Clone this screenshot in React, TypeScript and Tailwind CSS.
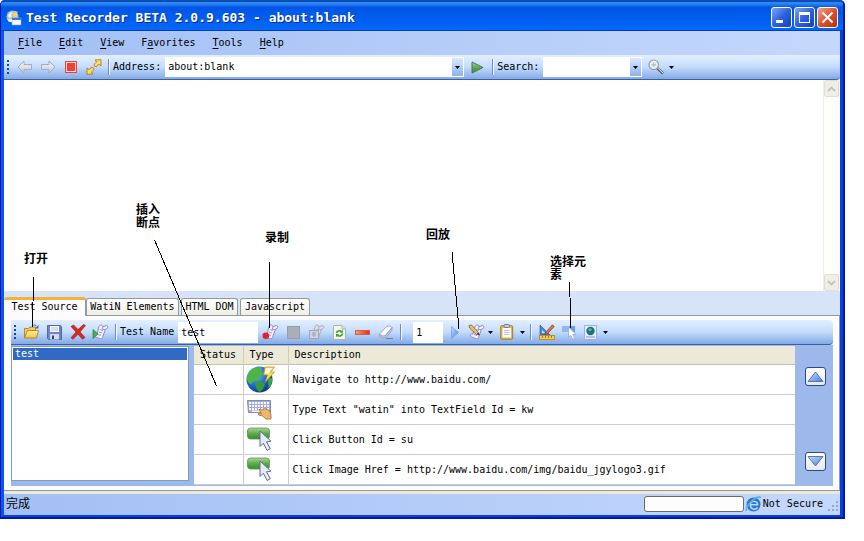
import type { ReactNode } from "react";

type Children = { children: ReactNode };

const MONO = "font-['DejaVu_Sans_Mono','Noto_Sans_CJK_SC',monospace]";

/* ---------- icons ---------- */

function Gradients() {
  return (
    <svg width="0" height="0" className="absolute" aria-hidden="true">
      <defs>
        <linearGradient id="gArrow" x1="0" y1="0" x2="0" y2="1">
          <stop offset="0" stopColor="#f3f6fb" />
          <stop offset="1" stopColor="#c3cbd8" />
        </linearGradient>
        <linearGradient id="gGreen" x1="0" y1="0" x2="0" y2="1">
          <stop offset="0" stopColor="#a9d694" />
          <stop offset="0.5" stopColor="#5dab4c" />
          <stop offset="1" stopColor="#3b8a34" />
        </linearGradient>
        <linearGradient id="gBlue" x1="0" y1="0" x2="1" y2="1">
          <stop offset="0" stopColor="#c9dcfb" />
          <stop offset="1" stopColor="#4a7fe0" />
        </linearGradient>
        <linearGradient id="gFolder" x1="0" y1="0" x2="0" y2="1">
          <stop offset="0" stopColor="#fff3a8" />
          <stop offset="1" stopColor="#f6c23c" />
        </linearGradient>
        <linearGradient id="gRed" x1="0" y1="0" x2="1" y2="0">
          <stop offset="0" stopColor="#f59a78" />
          <stop offset="1" stopColor="#d8321c" />
        </linearGradient>
        <radialGradient id="gGlobe" cx="0.35" cy="0.3" r="0.8">
          <stop offset="0" stopColor="#7cc4fa" />
          <stop offset="0.5" stopColor="#1f6fd6" />
          <stop offset="1" stopColor="#0a2c86" />
        </radialGradient>
      </defs>
    </svg>
  );
}

function AppIcon() {
  return (
    <svg width="16" height="16" viewBox="0 0 16 16" aria-hidden="true">
      <circle cx="6.5" cy="6.5" r="6" fill="#a9bdc9" />
      <path d="M2 5l3-3 2 1-2 2 1 2-3 1zM8 2l3 2-1 3-2-1z" fill="#f2f6e0" />
      <path d="M9 1l3 1-3 3 2 0-4 4 1-3H6z" fill="#f3d24a" />
      <rect x="6" y="8" width="9" height="7" fill="#f7f9ff" stroke="#8fa5d0" strokeWidth="0.6" />
      <rect x="6" y="8" width="9" height="2" fill="#3e78e0" />
      <path d="M1 9h5v3H3z" fill="#e8eef4" />
    </svg>
  );
}

function NavArrow({ flip = false }: { flip?: boolean }) {
  return (
    <svg width="16" height="14" viewBox="0 0 16 14" aria-hidden="true">
      <path
        d={flip ? "M15 7L9 1v3.500H1.500v5H9V13z" : "M1 7l6-6v3.500h7.500v5H7V13z"}
        fill="url(#gArrow)"
        stroke="#a7adb8"
      />
    </svg>
  );
}

function StopIcon() {
  return (
    <svg width="12" height="12" viewBox="0 0 12 12" aria-hidden="true">
      <rect x="0.5" y="0.5" width="11" height="11" fill="#ffd9d2" stroke="#e0452f" />
      <rect x="2" y="2" width="8" height="8" fill="#f04038" />
    </svg>
  );
}

function RefreshIcon() {
  return (
    <svg width="16" height="16" viewBox="0 0 16 16" aria-hidden="true">
      <path d="M9 1l6-.3V7l-2-1.600c-1.200.4-2 1.200-2.500 2.600L8 6.500c.3-1.500 1.200-2.700 2.600-3.500z" fill="#fddc6c" stroke="#b07a0c" strokeWidth="0.9" />
      <path d="M7 15l-6 .3V9l2 1.600c1.200-.4 2-1.200 2.500-2.600L8 9.500c-.3 1.500-1.200 2.700-2.600 3.500z" fill="#fddc6c" stroke="#b07a0c" strokeWidth="0.9" />
    </svg>
  );
}

function GoIcon() {
  return (
    <svg width="13" height="13" viewBox="0 0 13 13" aria-hidden="true">
      <path d="M1 1l11 5.500L1 12z" fill="url(#gGreen)" stroke="#4f7257" />
    </svg>
  );
}

function MagnifierIcon() {
  return (
    <svg width="16" height="16" viewBox="0 0 16 16" aria-hidden="true">
      <path d="M9 9l6 5.500" stroke="#5f5f5f" strokeWidth="2.600" />
      <path d="M9 8.500l6 5.500" stroke="#e4e4e4" strokeWidth="1" />
      <circle cx="5.800" cy="5.800" r="4.800" fill="#e6eff4" stroke="#9a9da2" strokeWidth="1.200" />
      <path d="M3.500 5.800h4.600M5.800 3.500v4.600" stroke="#b9c6cb" strokeWidth="1.400" />
    </svg>
  );
}

function FolderIcon() {
  return (
    <svg width="17" height="16" viewBox="0 0 17 16" aria-hidden="true">
      <path d="M1.500 14V4.500h4L7 3h5.500v4" fill="#f6cd58" stroke="#a87a14" strokeWidth="0.800" />
      <path d="M1.500 14l3-7.500h11l-2 7.500z" fill="url(#gFolder)" stroke="#a87a14" strokeWidth="0.800" />
      <path d="M9 2c2-1.500 3.500-1.500 5 .5" fill="none" stroke="#3f6fc0" />
      <path d="M15.500 1v3.500H12z" fill="#3f6fc0" />
    </svg>
  );
}

function SaveIcon() {
  return (
    <svg width="15" height="15" viewBox="0 0 15 15" aria-hidden="true">
      <path d="M.5.5h13l1 1v13H1.500l-1-1z" fill="#6f86cc" stroke="#5566a8" />
      <rect x="3" y="1" width="9" height="6" fill="#f5f8ff" />
      <path d="M4 3h7M4 5h7" stroke="#b8c4e4" />
      <rect x="3" y="9" width="9" height="5.500" fill="#d3dbe9" />
      <rect x="5" y="10.500" width="2" height="3.500" fill="#34447e" />
    </svg>
  );
}

function DeleteIcon() {
  return (
    <svg width="16" height="16" viewBox="0 0 16 16" aria-hidden="true">
      <path d="M1 2.500L3.500 1 8 5.500 13.500.5l2 1L10 8l5 5.500-2.500 1.700L8 10.300 3 15.300l-2-1.500L6 8z" fill="#d8291c" stroke="#a01410" strokeWidth="0.600" />
    </svg>
  );
}

function Scroll({ gray = false }: { gray?: boolean }) {
  const edge = gray ? "#a3a9b4" : "#8680b8";
  return (
    <>
      <path d="M7 2.500c.5-1.500 2.500-2 3.500-.8l.3 1 3.700-1.200c1.300 0 1.800 2 .8 2.800l-1.800.9-2.700 7.300c.3 1.500-1.800 3-3.200 2L3.500 13c-1.500-.3-1.500-2.800.3-3l1.200.2z" fill={gray ? "#d9dde4" : "#f0effb"} stroke={edge} strokeWidth="0.9" />
      <path d="M8 5.500l3 1M7 8l3 1M6 10.500l3 1M11 3l-.8 2.200 3 .5" fill="none" stroke={edge} strokeWidth="0.800" />
    </>
  );
}

function RunScriptIcon() {
  return (
    <svg width="17" height="16" viewBox="0 0 17 16" aria-hidden="true">
      <Scroll />
      <path d="M1 5.500l5 4.500-5 4.500z" fill="#4bb04a" stroke="#28802c" strokeWidth="0.700" />
    </svg>
  );
}

function RecordIcon() {
  return (
    <svg width="17" height="16" viewBox="0 0 17 16" aria-hidden="true">
      <Scroll />
      <circle cx="3.800" cy="11.800" r="3.300" fill="#e0202c" />
    </svg>
  );
}

function GrayBoxIcon() {
  return (
    <svg width="13" height="13" viewBox="0 0 13 13" aria-hidden="true">
      <rect x="0.500" y="0.500" width="12" height="12" fill="#a9aeb8" stroke="#989ea8" />
    </svg>
  );
}

function AddScriptIcon() {
  return (
    <svg width="17" height="16" viewBox="0 0 17 16" aria-hidden="true">
      <Scroll gray />
      <rect x="1.500" y="6.500" width="9" height="8" fill="#cdd2da" stroke="#a3a9b4" />
      <path d="M4 9h4M4 11h4M6 8v5" stroke="#a3a9b4" />
    </svg>
  );
}

function RecycleIcon() {
  return (
    <svg width="13" height="15" viewBox="0 0 13 15" aria-hidden="true">
      <path d="M.5.500h8.500l3.500 3.500v10.500H.5z" fill="#eef7e8" stroke="#a9b8ae" />
      <path d="M9 .5V4h3.500" fill="#d6e4d2" stroke="#a9b8ae" />
      <path d="M3.500 8c.2-2 3-3 5-1.500M9.500 8.500c-.2 2.500-3 3.200-5 1.800" fill="none" stroke="#3a9a30" strokeWidth="1.600" />
      <path d="M9.800 4.800v3H7zM3 12.300v-3.200h3z" fill="#3a9a30" />
    </svg>
  );
}

function MinusIcon() {
  return (
    <svg width="15" height="5" viewBox="0 0 15 5" aria-hidden="true">
      <rect x="0.500" y="0.500" width="14" height="4" fill="url(#gRed)" stroke="#dd5c40" />
    </svg>
  );
}

function EraserIcon() {
  return (
    <svg width="16" height="15" viewBox="0 0 16 15" aria-hidden="true">
      <path d="M8.500 1.500c2-1 5-.3 5.500 1l-6.500 8c-2 1.500-5.500.5-6-1.500z" fill="#f9fafd" stroke="#8f9bb2" strokeWidth="0.800" />
      <path d="M14 2.500v3L8 12.500c-1.500 1-5.500.5-6.500-1V9c1 2 4 2.500 6 1.500z" fill="#bcc6da" stroke="#8f9bb2" strokeWidth="0.700" />
      <path d="M8 13.500h7" stroke="#6d7fae" />
    </svg>
  );
}

function PlayIcon() {
  return (
    <svg width="8" height="13" viewBox="0 0 8 13" aria-hidden="true">
      <path d="M.5.500l7 6-7 6z" fill="url(#gBlue)" stroke="#6f9be8" strokeWidth="0.700" />
    </svg>
  );
}

function EditScriptIcon() {
  return (
    <svg width="17" height="16" viewBox="0 0 17 16" aria-hidden="true">
      <Scroll />
      <path d="M1 1.500l2.500-.5 7 7.500-2 2L1.500 4z" fill="#e3c06c" stroke="#7a6238" strokeWidth="0.800" />
      <path d="M8.500 10.500l2-2 1.300 3z" fill="#3b3326" />
    </svg>
  );
}

function ClipboardIcon() {
  return (
    <svg width="14" height="16" viewBox="0 0 14 16" aria-hidden="true">
      <rect x="0.700" y="1.700" width="12" height="13.500" rx="1" fill="#e6ba4c" stroke="#a07c28" />
      <rect x="2.500" y="4" width="8.500" height="9.500" fill="#fbfcff" />
      <path d="M4 6.500h5.500M4 8.500h5.500M4 10.500h5.500" stroke="#b5c3de" />
      <rect x="4" y="0.500" width="5.500" height="3" rx="1" fill="#c9ccd2" stroke="#777d88" />
    </svg>
  );
}

function RulerIcon() {
  return (
    <svg width="16" height="16" viewBox="0 0 16 16" aria-hidden="true">
      <path d="M1 1v10h10z" fill="#4c86e0" stroke="#2c5cb4" strokeWidth="0.700" />
      <path d="M3 6v3h3z" fill="#d5e5fa" />
      <rect x="0.500" y="11.500" width="15" height="4" fill="#f5cf4a" stroke="#b8902c" />
      <path d="M3.500 12v2M6.500 12v2M9.500 12v2M12.500 12v2" stroke="#a07c20" />
      <path d="M13.500.8l1.700 1.700-6.500 7-2.700 1.300 1-2.800z" fill="#e0743a" stroke="#7a3c1a" strokeWidth="0.700" />
    </svg>
  );
}

function PickIcon() {
  return (
    <svg width="15" height="16" viewBox="0 0 15 16" aria-hidden="true">
      <rect x="0" y="2" width="13" height="6" fill="#6a9de4" />
      <rect x="0" y="2" width="7" height="6" fill="#8fb8f0" />
      <path d="M6.500 3v10.500l2.300-2.200 1.900 4 2-1-1.900-3.800H14z" fill="#fff" stroke="#9ba8c0" strokeWidth="0.800" />
    </svg>
  );
}

function PageGlobeIcon() {
  return (
    <svg width="14" height="15" viewBox="0 0 14 15" aria-hidden="true">
      <path d="M.5.500h12v14H.5z" fill="#e4edfb" stroke="#9db1d6" />
      <path d="M2 12h9" stroke="#7d96c4" />
      <circle cx="6.500" cy="6" r="4.200" fill="#1f6e8e" />
      <path d="M4 4.500L6 3l2 1.500-2 2z" fill="#67c27a" />
    </svg>
  );
}

function GlobeIcon() {
  return (
    <svg width="30" height="27" viewBox="0 0 30 27" aria-hidden="true">
      <circle cx="13.500" cy="13.500" r="13" fill="url(#gGlobe)" />
      <path d="M2 8c3-5 9-7.500 14-6.500l-1 4 2 3-4 3-1 3-4 0-3 4C.5 16 .5 11 2 8z" fill="#4db540" />
      <path d="M9 16l6-1 4 3-2 5-3 3c-3-1-5-5-5-10z" fill="#3a9a3a" />
      <path d="M22 13l4-1c.5 4-1 8-3.500 10z" fill="#3fa83c" />
      <path d="M19 1h9.500l-4 5h4L19 16.500 21.500 9h-4z" fill="#f9dd58" stroke="#c08a14" strokeWidth="0.700" />
      <path d="M20 2h6.500L22 7.500h-3z" fill="#fffbe0" />
    </svg>
  );
}

function KeyboardIcon() {
  const keys: number[] = [0, 1, 2, 3, 4, 5, 6];
  return (
    <svg width="26" height="22" viewBox="0 0 26 22" aria-hidden="true">
      <path d="M1.500 2.500h23v12h-22z" fill="#a3aed4" stroke="#7f8bb8" />
      {[3, 6, 9].map((y) =>
        keys.map((k) => (
          <rect key={`${y}-${k}`} x={3 + k * 3} y={y + 1} width="2" height="2" fill="#fafbff" />
        )),
      )}
      <rect x="6" y="12.500" width="9" height="1.500" fill="#fafbff" />
      <path d="M13 11.500l3 .5 3-1.500 4.500 2 1.500 4.500v4h-5l-3.500-3-4-1 0-1.500 3 .3z" fill="#eeb56c" stroke="#a56b28" strokeWidth="0.800" />
    </svg>
  );
}

function ClickIcon() {
  return (
    <svg width="26" height="25" viewBox="0 0 26 25" aria-hidden="true">
      <rect x="1.500" y="1" width="22" height="11" rx="3" fill="url(#gGreen)" stroke="#559a4a" strokeWidth="0.800" />
      <path d="M14 4v15.500l3.300-3.300 3.800 7.300 3.200-1.800-3.800-6.900 4.500-.6z" fill="#e3eaf8" stroke="#5f6e8c" />
    </svg>
  );
}

function IeIcon() {
  return (
    <svg width="17" height="16" viewBox="0 0 17 16" aria-hidden="true">
      <circle cx="8.500" cy="8.500" r="7" fill="#2c78d0" />
      <path d="M5 8.800h8.200M12.500 11.500c-2 3-7 2.200-7.200-2.500C5.300 4.500 12 4 12.800 8.500" fill="none" stroke="#b9dcf8" strokeWidth="1.400" />
      <path d="M1.500 15C0 11 10-1 16 1.500" fill="none" stroke="#5aa9ea" strokeWidth="1.600" />
    </svg>
  );
}

function Chevron({ down = false }: { down?: boolean }) {
  return (
    <svg width="9" height="6" viewBox="0 0 9 6" aria-hidden="true">
      <path d={down ? "M1 1l3.500 3.500L8 1" : "M1 5l3.500-3.500L8 5"} fill="none" stroke="#c6c4b6" strokeWidth="1.800" />
    </svg>
  );
}

function CaretDown() {
  return (
    <svg width="5" height="3" viewBox="0 0 5 3" aria-hidden="true">
      <path d="M0 0h5L2.500 3z" fill="#000" />
    </svg>
  );
}

/* ---------- small parts ---------- */

function ToolButton({ label, narrow = false, children }: Children & { label: string; narrow?: boolean }) {
  return (
    <button
      type="button"
      aria-label={label}
      className={`flex h-[22px] shrink-0 items-center justify-center ${narrow ? "w-5" : "w-[23px]"}`}
    >
      {children}
    </button>
  );
}

function MenuArrow({ label }: { label: string }) {
  return (
    <button type="button" aria-label={label} className="flex h-[22px] w-[9px] shrink-0 items-center justify-center">
      <CaretDown />
    </button>
  );
}

function Grip() {
  return (
    <div className="mx-[3px] flex w-[3px] shrink-0 flex-col gap-[2px]">
      {[0, 1, 2, 3].map((n) => (
        <span key={n} className="size-[2px] bg-[#27418f]" />
      ))}
    </div>
  );
}

function Separator() {
  return <div className="mx-[3px] h-4 w-[2px] shrink-0 border-r border-l border-r-white border-l-[#6a8ccb]" />;
}

function Toolbar({ label, children }: Children & { label: string }) {
  return (
    <div
      role="toolbar"
      aria-label={label}
      className="flex h-[25px] items-center rounded-r-[4px] border-b border-[#3b619c] bg-linear-to-b from-[#e3efff] via-[#c4dcfd] to-[#83a9e6]"
    >
      {children}
    </div>
  );
}

function Combo({ id, value, width }: { id: string; value: string; width: string }) {
  return (
    <div className={`relative mr-[2px] ml-1 h-5 shrink-0 ${width}`}>
      <select id={id} defaultValue={value} className="h-5 w-full appearance-none bg-white pl-[3px] text-[10px] leading-5 outline-none">
        <option>{value}</option>
      </select>
      <span className="pointer-events-none absolute top-px right-px flex h-[18px] w-[11px] items-center justify-center bg-linear-to-b from-[#dbe9fe] to-[#8fb0e8]">
        <CaretDown />
      </span>
    </div>
  );
}

/* ---------- window ---------- */

function CaptionButton({ label, close = false, children }: Children & { label: string; close?: boolean }) {
  return (
    <button
      type="button"
      aria-label={label}
      className={`flex size-[21px] items-center justify-center rounded-[3px] border border-white bg-linear-to-br ${
        close ? "from-[#f0a088] via-[#e0512c] to-[#b8300c]" : "from-[#7ea4f4] via-[#2c62e0] to-[#1440c0]"
      }`}
    >
      {children}
    </button>
  );
}

function TitleBar() {
  return (
    <header className="flex h-[31px] items-center rounded-t-[4px] border-t-2 border-b border-t-[#0a50b4] border-b-[#0040bc] bg-linear-to-b from-[#2f86f4] from-5% via-[#0055e5] via-20% to-[#0268fb] pt-[3px] pr-[5px] pl-[5px]">
      <AppIcon />
      <h1 className="ml-1 flex-1 text-[13px] leading-4 font-bold whitespace-nowrap text-white [text-shadow:1px_1px_0_#0a2a8c]">
        Test Recorder BETA 2.0.9.603 - about:blank
      </h1>
      <div className="flex gap-[2px]">
        <CaptionButton label="Minimize">
          <svg width="13" height="13" viewBox="0 0 13 13"><path d="M1 9h7v3H1z" fill="#fff" /></svg>
        </CaptionButton>
        <CaptionButton label="Maximize">
          <svg width="13" height="13" viewBox="0 0 13 13"><path d="M1 1h11v11H1zM2 4v7h9V4z" fill="#fff" fillRule="evenodd" /></svg>
        </CaptionButton>
        <CaptionButton label="Close" close>
          <svg width="13" height="13" viewBox="0 0 13 13"><path d="M1.500 1.500l10 10M11.500 1.500l-10 10" stroke="#fff" strokeWidth="2" /></svg>
        </CaptionButton>
      </div>
    </header>
  );
}

const menus = [
  ["", "F", "ile"],
  ["", "E", "dit"],
  ["", "V", "iew"],
  ["F", "a", "vorites"],
  ["", "T", "ools"],
  ["", "H", "elp"],
];

function MenuBar() {
  return (
    <nav className="flex h-6 items-center gap-[17px] bg-linear-to-r from-[#a3bff4] to-[#c4d8fb] pl-[14px]">
      {menus.map(([before, key, after]) => (
        <button type="button" key={key + after}>
          {before}
          <u className="underline-offset-2">{key}</u>
          {after}
        </button>
      ))}
    </nav>
  );
}

function BrowserPane() {
  return (
    <section aria-label="Page" className="flex h-[211px] bg-white">
      <div className="flex-1" />
      <div className="flex w-[17px] flex-col justify-between border-l border-[#eeede5] bg-[#fefefb] pr-px">
        <button type="button" aria-label="Scroll up" className="flex h-[17px] items-center justify-center rounded-xs border border-[#e2e0d4] bg-[#f0efe6]">
          <Chevron />
        </button>
        <button type="button" aria-label="Scroll down" className="flex h-[17px] items-center justify-center rounded-xs border border-[#e2e0d4] bg-[#f0efe6]">
          <Chevron down />
        </button>
      </div>
    </section>
  );
}

const backTabs = [
  { name: "WatiN Elements", width: "w-[93px]" },
  { name: "HTML DOM", width: "w-[57px]" },
  { name: "Javascript", width: "w-[70px]" },
];

function Tabs() {
  return (
    <div role="tablist" className="flex h-[25px] items-end bg-[#d7e3f7]">
      <button type="button" role="tab" aria-selected="true" className="h-[19px] w-[82px] rounded-t-[3px] border-t-3 border-r border-t-[#f5b13a] border-r-[#919b9c] bg-[#fcfcfe] pb-[2px] leading-3">
        Test Source
      </button>
      <div className="flex h-4 flex-1 items-end gap-[2px] border-b border-[#919b9c]">
        {backTabs.map((tab) => (
          <button
            type="button"
            role="tab"
            aria-selected="false"
            key={tab.name}
            className={`h-[17px] rounded-t-[3px] border border-b-0 border-[#919b9c] bg-linear-to-b from-white to-[#efeee6] leading-4 whitespace-nowrap ${tab.width}`}
          >
            {tab.name}
          </button>
        ))}
      </div>
    </div>
  );
}

const steps = [
  { icon: <GlobeIcon />, text: "Navigate to http://www.baidu.com/" },
  { icon: <KeyboardIcon />, text: 'Type Text "watin" into TextField Id = kw' },
  { icon: <ClickIcon />, text: "Click Button Id = su" },
  { icon: <ClickIcon />, text: "Click Image Href = http://www.baidu.com/img/baidu_jgylogo3.gif" },
];

function StepTable() {
  return (
    <table className="flex-1 table-fixed border-collapse bg-white text-left">
      <thead>
        <tr className="h-[18px] border-b border-[#c5c2b2] bg-[#ece9d8]">
          <th scope="col" className="w-[49px] border-r border-[#d0cdbd] p-0 pl-[6px] font-normal">Status</th>
          <th scope="col" className="w-[45px] border-r border-[#d0cdbd] p-0 pl-[6px] font-normal">Type</th>
          <th scope="col" className="p-0 pl-[6px] font-normal">Description</th>
        </tr>
      </thead>
      <tbody>
        {steps.map((step, i) => (
          <tr key={i} className="h-[30px] border-b border-[#cccccc]">
            <td className="border-r border-[#cccccc]" />
            <td className="border-r border-[#cccccc] p-0 pl-[2px]">{step.icon}</td>
            <td className="p-0 pt-[2px] pl-1 whitespace-nowrap">{step.text}</td>
          </tr>
        ))}
      </tbody>
    </table>
  );
}

function MoveButton({ down = false }: { down?: boolean }) {
  return (
    <button
      type="button"
      aria-label={down ? "Move step down" : "Move step up"}
      className="flex h-[19px] w-[21px] items-center justify-center rounded-[3px] border border-[#2b4a86] bg-linear-to-b from-white to-[#e6e9f2]"
    >
      <svg width="17" height="11" viewBox="0 0 17 11" aria-hidden="true">
        <path d={down ? "M1 .5h15L8.500 10z" : "M1 10.500h15L8.500 1z"} fill="url(#gBlue)" stroke="#3d5fa8" strokeWidth="0.800" />
      </svg>
    </button>
  );
}

function TestSource() {
  return (
    <section aria-label="Test Source" className="border-r border-b border-[#919b9c] bg-[#fcfcfe] py-1 pr-[6px] pl-[7px]">
      <Toolbar label="Test">
        <Grip />
        <ToolButton label="Open"><FolderIcon /></ToolButton>
        <ToolButton label="Save"><SaveIcon /></ToolButton>
        <ToolButton label="Delete"><DeleteIcon /></ToolButton>
        <ToolButton label="Run script"><RunScriptIcon /></ToolButton>
        <Separator />
        <label htmlFor="test-name" className="whitespace-nowrap">Test Name</label>
        <input id="test-name" defaultValue="test" className="mr-px ml-1 h-[21px] w-20 bg-white pl-[3px] outline-none" />
        <ToolButton label="Record"><RecordIcon /></ToolButton>
        <ToolButton label="Stop"><GrayBoxIcon /></ToolButton>
        <ToolButton label="Add script"><AddScriptIcon /></ToolButton>
        <ToolButton label="Reload"><RecycleIcon /></ToolButton>
        <ToolButton label="Remove step"><MinusIcon /></ToolButton>
        <ToolButton label="Clear"><EraserIcon /></ToolButton>
        <Separator />
        <input aria-label="Repeat count" defaultValue="1" className="ml-2 h-[21px] w-[30px] bg-white pl-[3px] outline-none" />
        <ToolButton label="Play"><PlayIcon /></ToolButton>
        <ToolButton label="Edit script" narrow><EditScriptIcon /></ToolButton>
        <MenuArrow label="Edit script options" />
        <ToolButton label="Copy"><ClipboardIcon /></ToolButton>
        <MenuArrow label="Copy options" />
        <Separator />
        <ToolButton label="Design"><RulerIcon /></ToolButton>
        <ToolButton label="Select element"><PickIcon /></ToolButton>
        <ToolButton label="Page" narrow><PageGlobeIcon /></ToolButton>
        <MenuArrow label="Page options" />
      </Toolbar>
      <div className="flex bg-[#9db8ea] py-px">
        <ul role="listbox" aria-label="Tests" className="mr-[5px] mb-1 w-[178px] shrink-0 border border-[#7f9db9] bg-white p-px">
          <li role="option" aria-selected="true" className="h-3 bg-[#316ac5] pl-[2px] leading-3 text-white">test</li>
        </ul>
        <StepTable />
        <div className="flex w-[38px] shrink-0 flex-col items-center justify-between pt-[21px] pr-px pb-[14px] pl-[3px]">
          <MoveButton />
          <MoveButton down />
        </div>
      </div>
    </section>
  );
}

function StatusBar() {
  return (
    <footer className="flex h-[21px] items-center bg-linear-to-r from-[#a3bff4] to-[#c4d8fb] pr-px pl-[2px]">
      <span className="flex-1 text-[12px] leading-4">完成</span>
      <div role="progressbar" aria-label="Loading" className="mr-px h-4 w-[100px] rounded-[3px] border border-[#6b6b6b] bg-white" />
      <IeIcon />
      <span className="ml-px">Not Secure</span>
      <svg width="12" height="12" viewBox="0 0 12 12" className="mt-1 ml-1" aria-hidden="true">
        <path d="M9 1h2v2H9zM9 5h2v2H9zM5 5h2v2H5zM9 9h2v2H9zM5 9h2v2H5zM1 9h2v2H1z" fill="#93a6cf" />
      </svg>
    </footer>
  );
}

/* ---------- callouts drawn over the window ---------- */

function Callouts() {
  const label = "absolute flex flex-col text-[12px] leading-[13px] font-bold font-['Liberation_Sans','Noto_Sans_CJK_SC',sans-serif]";
  return (
    <div className="pointer-events-none absolute inset-0 text-black">
      <div className={`${label} top-[253px] left-6`}>打开</div>
      <div className={`${label} top-[204px] left-[136px]`}>
        <span>插入</span>
        <span>断点</span>
      </div>
      <div className={`${label} top-[232px] left-[265px]`}>录制</div>
      <div className={`${label} top-[229px] left-[426px]`}>回放</div>
      <div className={`${label} top-[256px] left-[550px]`}>
        <span>选择元</span>
        <span>素</span>
      </div>
      <svg width="845" height="519" className="absolute top-0 left-0" shapeRendering="crispEdges" aria-hidden="true">
        <path d="M33.500 277l-1 50M154.500 240l62 146M269.500 262l.5 66M452 252l7 77M569.500 282l1.500 46" fill="none" stroke="#000" />
      </svg>
    </div>
  );
}

export default function App() {
  return (
    <div className={`min-h-screen bg-white pr-[19px] text-[10px] leading-3 text-black ${MONO}`}>
      <Gradients />
      <div className="relative">
        <div className="rounded-t-[5px] border-r-2 border-b-2 border-l border-[#0019a8] bg-[#0855dd]">
          <TitleBar />
          <main className="border-r-3 border-b-2 border-l-3 border-r-[#0a3fdc] border-b-[#0a3fdc] border-l-[#0a55ee] bg-[#ece9d8]">
            <MenuBar />
            <Toolbar label="Navigation">
              <Grip />
              <ToolButton label="Back"><NavArrow /></ToolButton>
              <ToolButton label="Forward"><NavArrow flip /></ToolButton>
              <ToolButton label="Stop loading"><StopIcon /></ToolButton>
              <ToolButton label="Refresh"><RefreshIcon /></ToolButton>
              <Separator />
              <label htmlFor="address">Address:</label>
              <Combo id="address" value="about:blank" width="w-[299px]" />
              <ToolButton label="Go"><GoIcon /></ToolButton>
              <Separator />
              <label htmlFor="search">Search:</label>
              <Combo id="search" value="" width="w-[99px]" />
              <ToolButton label="Find"><MagnifierIcon /></ToolButton>
              <MenuArrow label="Find options" />
            </Toolbar>
            <BrowserPane />
            <Tabs />
            <TestSource />
            <div className="h-[3px] bg-[#ece9d8]" />
            <StatusBar />
          </main>
        </div>
        <Callouts />
      </div>
    </div>
  );
}
